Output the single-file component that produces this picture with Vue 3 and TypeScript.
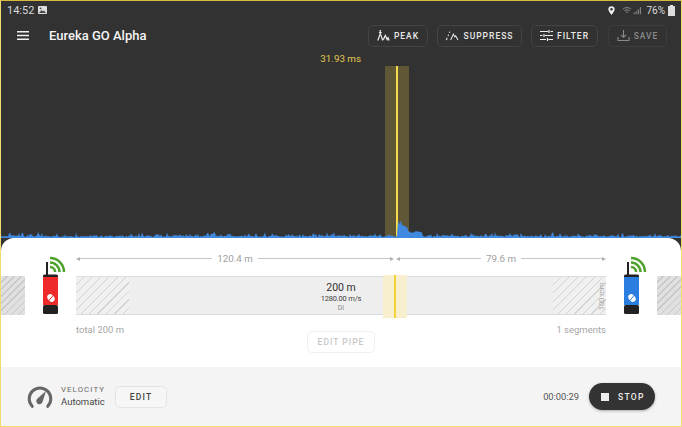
<script setup lang="ts">
import { computed } from 'vue'

function rand(seed: number): number {
  const v = Math.sin(seed * 12.9898) * 43758.5453
  return v - Math.floor(v)
}

const wavePath = computed(() => {
  let d = 'M0 24'
  for (let x = 0; x <= 680; x += 1) {
    let h = 1 + rand(x) * 1.8
    if (rand(x + 900) > 0.78) h += rand(x + 300) * 3.6
    if (x >= 397 && x < 404) h = 21 - (x - 397) * 0.8 - rand(x) * 7
    else if (x >= 404 && x < 410) h = 14 - (x - 404) * 1.1 - rand(x) * 4
    else if (x >= 410 && x < 422) h = 8 - Math.abs(x - 416) * 0.4 - rand(x) * 1.5
    d += ` L${x} ${(24 - h).toFixed(1)}`
  }
  return d + ' L680 24 Z'
})

const buttons = [
  { label: 'PEAK', cls: 'b-peak', muted: false },
  { label: 'SUPPRESS', cls: 'b-suppress', muted: false },
  { label: 'FILTER', cls: 'b-filter', muted: false },
  { label: 'SAVE', cls: 'b-save', muted: true },
]
</script>

<template>
  <div class="screen">
    <header class="top">
      <div class="status">
        <span class="clock">14:52</span>
        <svg class="pic" viewBox="0 0 9 8" width="9" height="8"><rect width="9" height="8" rx="1" fill="#ddd" /><path d="M1 7 3.500 4l1.500 1.500 1-1L8 7z" fill="#444" /><circle cx="2.600" cy="2.300" r=".9" fill="#444" /></svg>
        <span class="spacer"></span>
        <svg class="loc" viewBox="0 0 8 10" width="7" height="9"><path d="M4 0a3.600 3.600 0 0 0-3.600 3.600C.4 6 4 10 4 10s3.600-4 3.600-6.400A3.600 3.600 0 0 0 4 0z" fill="#eee" /><circle cx="4" cy="3.600" r="1.400" fill="#333" /></svg>
        <svg class="sig" viewBox="0 0 24 10" width="20" height="9" fill="none" stroke="#999"><path d="M1 3.400a7.500 7.500 0 0 1 10 0M2.800 5.300a5 5 0 0 1 6.400 0M4.600 7.100a2.400 2.400 0 0 1 2.800 0" /><path d="M14.500 9.500v-2M17 9.500V6M19.500 9.500V3.500M22 9.500V1" stroke="#aaa" /></svg>
        <span class="pct">76%</span>
        <svg viewBox="0 0 7 11" width="7" height="11"><path d="M2 0h3v1h1.500a.5.500 0 0 1 .5.500V11H0V1.500A.5.500 0 0 1 .5 1H2z" fill="#ddd" /></svg>
      </div>
      <div class="toolbar">
        <svg class="menu" viewBox="0 0 12 9" width="12" height="9"><path d="M0 .75h12M0 4.500h12M0 8.250h12" stroke="#f2f2f2" stroke-width="1.300" /></svg>
        <span class="title">Eureka GO Alpha</span>
        <span class="spacer"></span>
        <button v-for="b in buttons" :key="b.label" class="tool" :class="[b.cls, { muted: b.muted }]">
          <svg v-if="b.label === 'PEAK'" viewBox="0 0 14 12" width="13" height="11" fill="none" stroke="#eee" stroke-width="1.300"><path d="M.8 11.500 3.500 4l2.700 7.500M6.800 10.500 9 6l2 4.500 1-2 1.200 3" /><path d="M2 2.800h3" /><circle cx="3.500" cy="1" r="1" fill="#eee" stroke="none" /></svg>
          <svg v-else-if="b.label === 'SUPPRESS'" viewBox="0 0 14 12" width="14" height="11" fill="none" stroke="#eee" stroke-width="1.100"><path d="M5.500 11 8.500 4.500l1.500 3 1-1.200 2.500 4.700" /><path d="M.8 11l1-2.500M2.700 6.500l.6-1.500M4.200 3l.5-1.300" /></svg>
          <svg v-else-if="b.label === 'FILTER'" viewBox="0 0 13 11" width="13" height="11" fill="none" stroke="#eee" stroke-width="1.200"><path d="M0 1.500h8M10.500 1.500H13M0 5.500h2.500M5 5.500h8M0 9.500h6M8.500 9.500H13M9 0v3M4 4v3M7.500 8v3" /></svg>
          <svg v-else viewBox="0 0 13 13" width="13" height="13" fill="none" stroke="#8a8a8a" stroke-width="1.100"><path d="M6.500 1v7M4 5.800l2.500 2.500L9 5.800M1 8v3.500h11V8" /></svg>
          <span>{{ b.label }}</span>
        </button>
      </div>
    </header>

    <section class="chart">
      <div class="band"><span class="ms">31.93 ms</span><i class="cursor"></i></div>
      <svg class="wave" viewBox="0 0 680 24" preserveAspectRatio="none"><path :d="wavePath" fill="#3f8ae0" /></svg>
    </section>

    <section class="sheet">
      <div class="stage">
        <div class="stub"></div>
        <div class="device red">
          <svg viewBox="0 0 17 60" width="17" height="60">
            <path d="M7 3a14 14 0 0 1 14 14M7 7.500a9.500 9.500 0 0 1 9.500 9.500M7 12a5 5 0 0 1 5 5" fill="none" stroke="#4fa32c" stroke-width="2.500" />
            <rect x="3" y="7" width="2" height="14" fill="#222" />
            <rect x="0" y="19.500" width="15" height="4" rx="1.500" fill="#222" />
            <rect x="0" y="22" width="15" height="28" fill="#ee2a2a" />
            <rect x="0" y="50" width="15" height="9" rx="1.500" fill="#222" />
            <ellipse cx="8" cy="43" rx="3.200" ry="4.200" transform="rotate(-40 8 43)" fill="#fff" />
            <path d="M4.500 47 11 39.500" stroke="#ee2a2a" stroke-width="1" />
          </svg>
        </div>
        <div class="pipe-col">
          <div class="measures">
            <div class="measure m-left"><span class="tip left"></span><span class="rule"></span><span class="m-text">120.4 m</span><span class="rule"></span><span class="tip right"></span></div>
            <div class="measure m-right"><span class="tip left"></span><span class="rule"></span><span class="m-text">79.6 m</span><span class="rule"></span><span class="tip right"></span></div>
          </div>
          <div class="pipe">
            <div class="cap"></div>
            <div class="pipe-body">
              <div class="pipe-label">
                <strong>200 m</strong>
                <span>1280.00 m/s</span>
                <em>DI</em>
              </div>
              <div class="pipe-marker"><i></i></div>
            </div>
            <div class="cap cap-r"><span class="depth">100 mm</span></div>
          </div>
          <div class="pipe-meta"><span>total 200 m</span><span>1 segments</span></div>
        </div>
        <div class="device blue">
          <svg viewBox="0 0 17 60" width="17" height="60">
            <path d="M7 3a14 14 0 0 1 14 14M7 7.500a9.500 9.500 0 0 1 9.500 9.500M7 12a5 5 0 0 1 5 5" fill="none" stroke="#4fa32c" stroke-width="2.500" />
            <rect x="3" y="7" width="2" height="14" fill="#222" />
            <rect x="0" y="19.500" width="15" height="4" rx="1.500" fill="#222" />
            <rect x="0" y="22" width="15" height="28" fill="#2b7de0" />
            <rect x="0" y="50" width="15" height="9" rx="1.500" fill="#222" />
            <ellipse cx="8" cy="43" rx="3.200" ry="4.200" transform="rotate(-40 8 43)" fill="#fff" />
            <path d="M4.500 47 11 39.500" stroke="#2b7de0" stroke-width="1" />
          </svg>
        </div>
        <div class="stub"></div>
      </div>
      <div class="pipe-action"><button class="edit-pipe">EDIT PIPE</button></div>

      <footer class="footer">
        <svg class="gauge" viewBox="0 0 26 22" width="26" height="22" fill="none">
          <path d="M5.200 20.300A10.800 10.800 0 1 1 20.800 20.300" stroke="#666" stroke-width="3" stroke-linecap="round" />
          <path d="M19 5 15.500 16a3.200 3.200 0 1 1-5-3.500z" fill="#666" />
        </svg>
        <div class="velocity"><small>VELOCITY</small><span>Automatic</span></div>
        <button class="edit">EDIT</button>
        <span class="spacer"></span>
        <span class="time">00:00:29</span>
        <button class="stop"><i></i><span>STOP</span></button>
      </footer>
    </section>
  </div>
</template>

<style>
html, body { margin: 0; padding: 0; }
</style>

<style scoped>
* { box-sizing: border-box; }
.screen {
  width: 682px; height: 427px; display: flex; flex-direction: column; overflow: hidden;
  background: #323232; border: 1px solid #f3dc6b; border-top-color: #d8b93f;
  font-family: Roboto, "Liberation Sans", sans-serif; color: #333;
}
.spacer { flex: 1; }
.top { flex: none; }
.status { height: 16px; padding: 2px 6px 0 6px; display: flex; align-items: center; gap: 3px; color: #ddd; }
.clock { font-size: 11px; margin-right: 1px; color: #d8d8d8; }
.pic { margin-top: -1px; }
.loc { margin-right: 2px; }
.sig { margin: 0 1px 0 2px; }
.pct { font-size: 10px; color: #ddd; }
.toolbar { height: 36px; padding: 1px 14px 0 16px; display: flex; align-items: center; }
.menu { margin-right: 20px; }
.title { font-size: 13px; font-weight: 500; color: #f5f5f5; }
.tool {
  height: 22px; padding: 0; margin-left: 9px; display: flex; align-items: center; justify-content: center; gap: 4px;
  background: transparent; border: 1px solid #444; border-radius: 5px; color: #e8e8e8;
  font: 500 8.500px Roboto, sans-serif; letter-spacing: 1px;
}
.b-peak { width: 60px; }
.b-suppress { width: 85px; }
.b-filter { width: 67px; }
.b-save { width: 59px; margin-left: 10px; }
.muted { color: #8a8a8a; border-color: #3d3d3d; }
.chart { flex: 1; position: relative; }
.band { position: absolute; left: 384px; top: 13px; bottom: 0; width: 24px; background: #5f5736; }
.cursor { position: absolute; left: 10.500px; top: 0; bottom: 0; width: 2.500px; background: #f6db4a; }
.ms { position: absolute; right: 48px; top: -13px; white-space: nowrap; font-size: 9.800px; color: #e4c84f; }
.wave { position: absolute; left: 0; right: 0; bottom: 0; width: 100%; height: 24px; display: block; }
.sheet { flex: none; height: 188px; position: relative; background: #fff; border-radius: 13px 13px 0 0; display: flex; flex-direction: column; }
.stage { height: 93px; display: flex; align-items: flex-start; }
.stub {
  width: 24px; height: 39px; margin-top: 38px;
  background: repeating-linear-gradient(135deg, #e0e0e0 0 4px, #c6c6c6 4px 5px);
}
.device { width: 17px; margin-top: 17px; flex: none; }
.device svg { display: block; overflow: visible; }
.red { margin-left: 18px; margin-right: 16px; }
.blue { margin-left: 18px; margin-right: 16px; }
.pipe-col { width: 530px; flex: none; padding-top: 13px; }
.measures { height: 15px; display: flex; gap: 2px; }
.measure { display: flex; align-items: center; gap: 0; color: #a0a0a0; font-size: 9.800px; }
.m-left { width: 318px; }
.m-right { width: 210px; }
.rule { flex: 1; height: 1.300px; background: #c6c6c6; }
.m-text { padding: 0 5px; }
.tip { width: 0; height: 0; border-top: 2.500px solid transparent; border-bottom: 2.500px solid transparent; }
.tip.left { border-right: 4px solid #b0b0b0; }
.tip.right { border-left: 4px solid #b0b0b0; }
.pipe { margin-top: 10px; height: 39px; display: flex; background: #eee; border-top: 1px solid #dcdcdc; border-bottom: 1px solid #dcdcdc; }
.cap {
  width: 53px; flex: none; position: relative;
  background: repeating-linear-gradient(135deg, #f0f0f0 0 5px, #d2d2d2 5px 6px);
}
.depth {
  position: absolute; right: -10px; top: 15px; font-size: 7.500px; color: #a8a8a8;
  transform: rotate(-90deg); white-space: nowrap;
}
.pipe-body { flex: 1; position: relative; display: flex; justify-content: center; }
.pipe-label {
  display: flex; flex-direction: column; align-items: center; width: 70px; margin-left: 0;
  padding-top: 6px; line-height: 1;
}
.pipe-label strong { font-weight: 400; font-size: 10.500px; color: #333; }
.pipe-label span { font-size: 7.500px; letter-spacing: -.2px; color: #444; margin-top: 1px; }
.pipe-label em { font-style: normal; font-size: 7px; color: #888; margin-top: 2.500px; }
.pipe-marker { position: absolute; left: 254px; top: -2px; height: 43px; width: 24px; background: #f8efcf; }
.pipe-marker i { position: absolute; left: 11px; top: 0; bottom: 0; width: 2px; background: #f2d33a; }
.pipe-meta { display: flex; justify-content: space-between; margin-top: 9px; font-size: 9.500px; color: #a6a6a6; line-height: 12px; }
.pipe-action { height: 36px; display: flex; justify-content: center; align-items: flex-start; }
.edit-pipe {
  width: 68px; height: 22px; background: #fff; border: 1px solid #f0f0f0; border-radius: 5px;
  font: 500 8.500px Roboto, sans-serif; letter-spacing: 1px; color: #c8c8c8; padding: 0;
}
.footer { flex: 1; background: #f4f4f4; display: flex; align-items: center; padding: 0 26px; }
.gauge { flex: none; }
.velocity { width: 44px; margin-left: 8px; display: flex; flex-direction: column; line-height: 1; }
.velocity small { font-size: 7.800px; letter-spacing: 1.100px; color: #666; }
.velocity span { font-size: 9.500px; margin-top: 3px; color: #444; white-space: nowrap; }
.edit {
  width: 52px; height: 22px; margin-left: 10px; padding: 0; background: #f6f6f6; border: 1px solid #e4e4e4; border-radius: 5px;
  font: 500 8.500px Roboto, sans-serif; letter-spacing: 1.200px; color: #444;
}
.time { font-size: 9.300px; color: #555; margin-right: 10px; }
.stop {
  width: 66px; height: 27px; padding: 0 0 0 12px; border: none; border-radius: 14px; background: #333; color: #eee;
  display: flex; align-items: center; gap: 9px; box-shadow: 0 1px 3px rgba(0,0,0,.3);
  font: 500 8.500px Roboto, sans-serif; letter-spacing: 1.300px;
}
.stop i { width: 8px; height: 8px; background: #eee; }
</style>
